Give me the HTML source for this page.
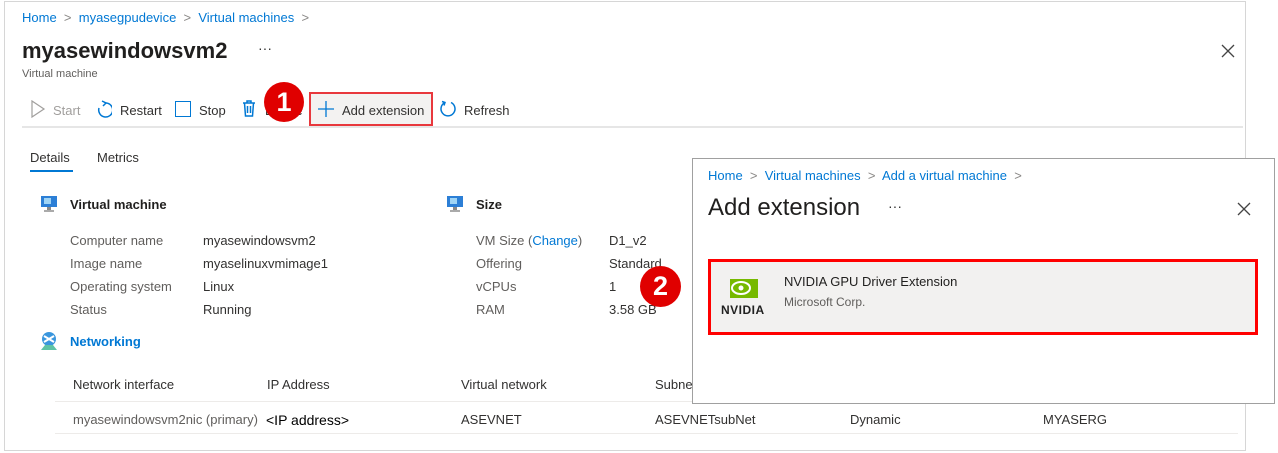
<!DOCTYPE html>
<html><head><meta charset="utf-8"><style>
*{margin:0;padding:0;box-sizing:border-box}
body{width:1278px;height:453px;background:#fff;font-family:"Liberation Sans",sans-serif;color:#323130;position:relative;overflow:hidden;font-size:13px}
.a{position:absolute;white-space:nowrap}
.blue{color:#0078d4}
.gray{color:#605e5c}
.sep{color:#8a8886}
</style></head><body>
<div class="a" style="left:4px;top:1px;width:1242px;height:450px;border:1px solid #d6d6d6"></div>
<div class="a blue" style="left:22px;top:10px;font-size:13px">Home <span class="sep">&nbsp;&gt;&nbsp;</span> myasegpudevice <span class="sep">&nbsp;&gt;&nbsp;</span> Virtual machines <span class="sep">&nbsp;&gt;</span></div>
<div class="a" style="left:22px;top:38px;font-size:22px;font-weight:bold;color:#201f1e">myasewindowsvm2</div>
<div class="a" style="left:258px;top:40px;font-size:14px">···</div>
<div class="a gray" style="left:22px;top:68px;font-size:11px">Virtual machine</div>
<svg class="a" style="left:1220px;top:43px" width="16" height="16"><path d="M2 2L14 14M14 2L2 14" stroke="#444" stroke-width="1.3"/></svg>
<!-- toolbar -->
<svg class="a" style="left:30px;top:100px" width="16" height="18"><path d="M2 1L14 9L2 17Z" fill="none" stroke="#a19f9d" stroke-width="1.2"/></svg>
<div class="a" style="left:53px;top:103px;color:#a19f9d">Start</div>
<svg class="a" style="left:96px;top:100px" width="16" height="18"><path d="M10 3A7 7 0 1 1 3 8" fill="none" stroke="#0078d4" stroke-width="1.5"/><path d="M6 1L10 3L7 6" fill="none" stroke="#0078d4" stroke-width="1.5"/></svg>
<div class="a" style="left:120px;top:103px">Restart</div>
<div class="a" style="left:175px;top:101px;width:16px;height:16px;border:1.5px solid #0078d4"></div>
<div class="a" style="left:199px;top:103px">Stop</div>
<svg class="a" style="left:241px;top:99px" width="16" height="19"><path d="M2 4H14M6 4V2H10V4M3.5 4L4.5 17H11.5L12.5 4M6.5 7V14M9.5 7V14" fill="none" stroke="#0078d4" stroke-width="1.5"/></svg>
<div class="a" style="left:265px;top:103px">Delete</div>
<div class="a" style="left:309px;top:92px;width:124px;height:34px;border:2px solid #e8383d;background:#f3f2f1"></div>
<svg class="a" style="left:318px;top:101px" width="16" height="16"><path d="M8 0V16M0 8H16" stroke="#0078d4" stroke-width="1.3"/></svg>
<div class="a" style="left:342px;top:103px">Add extension</div>
<svg class="a" style="left:439px;top:100px" width="18" height="18"><path d="M6 2.5A7 7 0 1 0 12 2.5" fill="none" stroke="#0078d4" stroke-width="1.5"/><path d="M3 1.5L6 2.5L5 5.5" fill="none" stroke="#0078d4" stroke-width="1.5"/></svg>
<div class="a" style="left:464px;top:103px">Refresh</div>
<div class="a" style="left:264px;top:82px;width:40px;height:40px;border-radius:50%;background:#e00000;color:#fff;font-weight:bold;font-size:27px;text-align:center;line-height:40px">1</div>
<div class="a" style="left:22px;top:126px;width:1221px;height:2px;background:#e6e6e6"></div>
<!-- tabs -->
<div class="a" style="left:30px;top:150px;font-size:13px">Details</div>
<div class="a" style="left:30px;top:170px;width:43px;height:2px;background:#0078d4"></div>
<div class="a" style="left:97px;top:150px;font-size:13px">Metrics</div>
<!-- VM section -->
<svg class="a" style="left:40px;top:195px" width="18" height="18"><rect x="1" y="1" width="16" height="11" fill="#2c7fd6"/><rect x="4" y="3" width="7" height="6" fill="#9fd4f5"/><rect x="7" y="12" width="4" height="3" fill="#888"/><rect x="4" y="15" width="10" height="2" fill="#aaa"/></svg>
<div class="a" style="left:70px;top:197px;font-weight:bold;color:#201f1e">Virtual machine</div>
<div class="a gray" style="left:70px;top:233px">Computer name</div><div class="a" style="left:203px;top:233px">myasewindowsvm2</div>
<div class="a gray" style="left:70px;top:256px">Image name</div><div class="a" style="left:203px;top:256px">myaselinuxvmimage1</div>
<div class="a gray" style="left:70px;top:279px">Operating system</div><div class="a" style="left:203px;top:279px">Linux</div>
<div class="a gray" style="left:70px;top:302px">Status</div><div class="a" style="left:203px;top:302px">Running</div>
<svg class="a" style="left:446px;top:195px" width="18" height="18"><rect x="1" y="1" width="16" height="11" fill="#2c7fd6"/><rect x="4" y="3" width="7" height="6" fill="#9fd4f5"/><rect x="7" y="12" width="4" height="3" fill="#888"/><rect x="4" y="15" width="10" height="2" fill="#aaa"/></svg>
<div class="a" style="left:476px;top:197px;font-weight:bold;color:#201f1e">Size</div>
<div class="a gray" style="left:476px;top:233px">VM Size (<span class="blue">Change</span>)</div><div class="a" style="left:609px;top:233px">D1_v2</div>
<div class="a gray" style="left:476px;top:256px">Offering</div><div class="a" style="left:609px;top:256px">Standard</div>
<div class="a gray" style="left:476px;top:279px">vCPUs</div><div class="a" style="left:609px;top:279px">1</div>
<div class="a gray" style="left:476px;top:302px">RAM</div><div class="a" style="left:609px;top:302px">3.58 GB</div>
<svg class="a" style="left:39px;top:331px" width="20" height="20"><circle cx="10" cy="8" r="7" fill="#3a96dd"/><path d="M5 5L15 11M15 5L5 11" stroke="#fff" stroke-width="2"/><path d="M2 19L6 14H14L18 19Z" fill="#5fc3a5"/></svg>
<div class="a blue" style="left:70px;top:334px;font-weight:bold">Networking</div>
<div class="a" style="left:73px;top:377px">Network interface</div>
<div class="a" style="left:267px;top:377px">IP Address</div>
<div class="a" style="left:461px;top:377px">Virtual network</div>
<div class="a" style="left:655px;top:377px">Subnet</div>
<div class="a" style="left:55px;top:401px;width:1183px;height:1px;background:#edebe9"></div>
<div class="a gray" style="left:73px;top:412px">myasewindowsvm2nic (primary)</div>
<div class="a" style="left:266px;top:412px;font-size:14px;color:#000">&lt;IP address&gt;</div>
<div class="a" style="left:461px;top:412px">ASEVNET</div>
<div class="a" style="left:655px;top:412px">ASEVNETsubNet</div>
<div class="a" style="left:850px;top:412px">Dynamic</div>
<div class="a" style="left:1043px;top:412px">MYASERG</div>
<div class="a" style="left:55px;top:433px;width:1183px;height:1px;background:#edebe9"></div>
<!-- popup -->
<div class="a" style="left:692px;top:158px;width:583px;height:246px;border:1px solid #a0a0a0;background:#fff"></div>
<div class="a blue" style="left:708px;top:168px;font-size:13px">Home <span class="sep">&nbsp;&gt;&nbsp;</span> Virtual machines <span class="sep">&nbsp;&gt;&nbsp;</span> Add a virtual machine <span class="sep">&nbsp;&gt;</span></div>
<div class="a" style="left:708px;top:194px;font-size:24px;color:#201f1e">Add extension</div>
<div class="a" style="left:888px;top:198px;font-size:14px">···</div>
<svg class="a" style="left:1237px;top:202px" width="14" height="14"><path d="M1 1L13 13M13 1L1 13" stroke="#444" stroke-width="1.3"/></svg>
<div class="a" style="left:708px;top:259px;width:550px;height:76px;border:3px solid #ff0000;background:#f2f1f0"></div>
<svg class="a" style="left:721px;top:279px" width="45" height="20"><rect x="9" y="0" width="28" height="19" fill="#76b900"/><ellipse cx="20" cy="9" rx="9" ry="6" fill="none" stroke="#fff" stroke-width="2"/><circle cx="20" cy="9" r="2.5" fill="#fff"/></svg>
<div class="a" style="left:721px;top:303px;font-weight:bold;font-size:12px;color:#222;letter-spacing:0.5px">NVIDIA</div>
<div class="a" style="left:784px;top:274px;font-size:13px;color:#201f1e">NVIDIA GPU Driver Extension</div>
<div class="a" style="left:784px;top:295px;font-size:12px;color:#605e5c">Microsoft Corp.</div>
<div class="a" style="left:640px;top:266px;width:41px;height:41px;border-radius:50%;background:#e00000;color:#fff;font-weight:bold;font-size:27px;text-align:center;line-height:41px">2</div>
</body></html>
